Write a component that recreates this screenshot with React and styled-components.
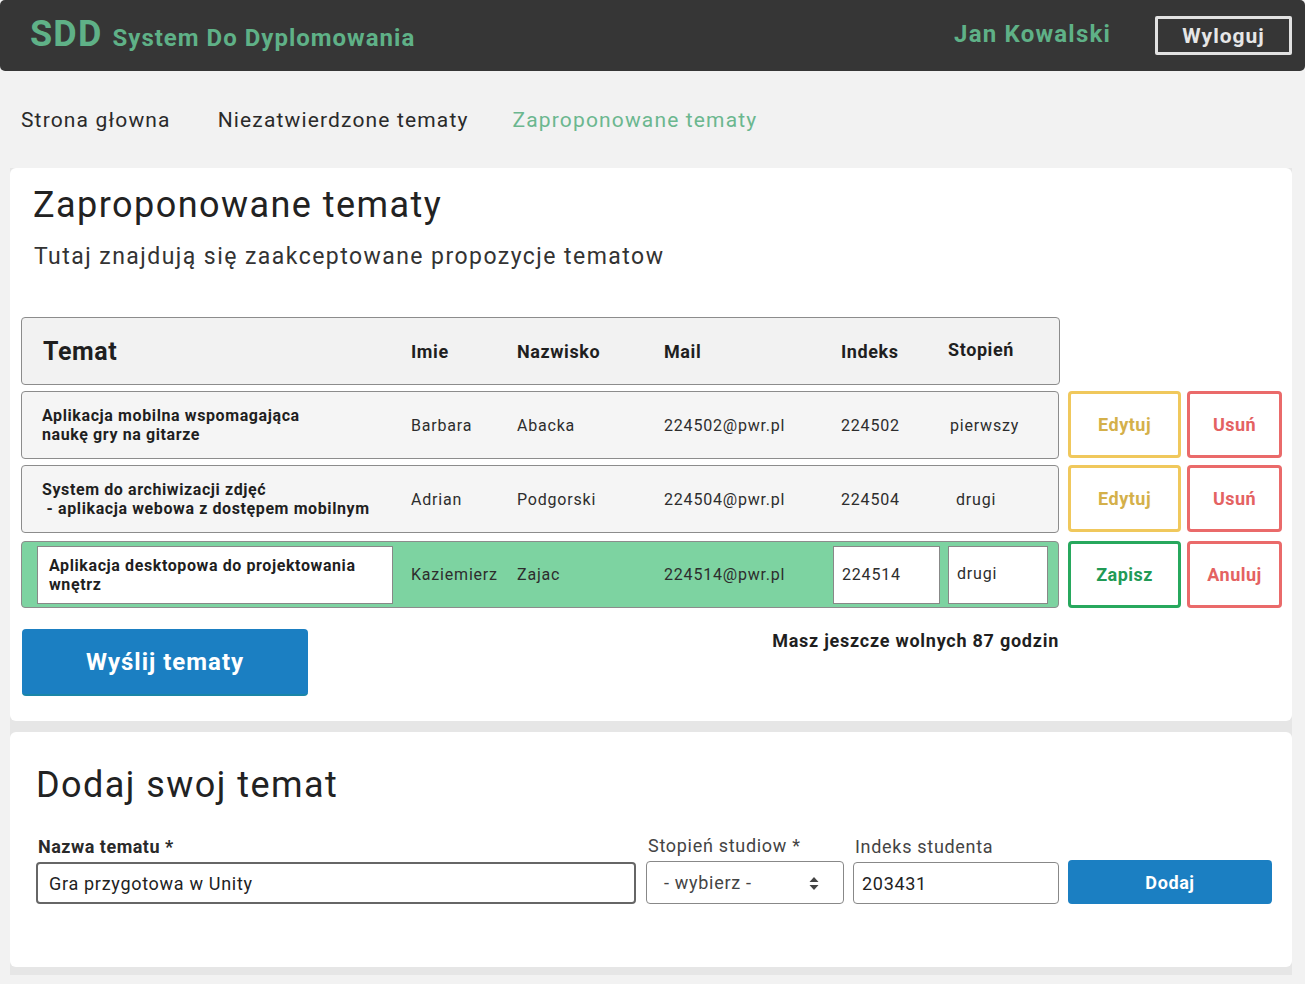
import styled, { createGlobalStyle } from "styled-components";

const GlobalStyle = createGlobalStyle`
  body {
    margin: 0;
    background: #f2f2f2;
    font-family: Roboto, "Noto Sans", sans-serif;
    color: #222;
  }
  * { box-sizing: border-box; }
`;

const topics = [
  {
    title: "Aplikacja mobilna wspomagająca\nnaukę gry na gitarze",
    name: "Barbara",
    surname: "Abacka",
    mail: "224502@pwr.pl",
    index: "224502",
    degree: "pierwszy",
  },
  {
    title: "System do archiwizacji zdjęć\n - aplikacja webowa z dostępem mobilnym",
    name: "Adrian",
    surname: "Podgorski",
    mail: "224504@pwr.pl",
    index: "224504",
    degree: "drugi",
  },
];

const App = () => {
  return (
    <>
      <GlobalStyle />
      <Header>
        <Brand>
          <Logo>SDD</Logo>
          <BrandName>System Do Dyplomowania</BrandName>
        </Brand>
        <User>Jan Kowalski</User>
        <Logout>Wyloguj</Logout>
      </Header>

      <Nav>
        <NavLink>Strona głowna</NavLink>
        <NavLink>Niezatwierdzone tematy</NavLink>
        <NavLink $active>Zaproponowane tematy</NavLink>
      </Nav>

      <Cards>
        <Card>
          <Title>Zaproponowane tematy</Title>
          <Subtitle>Tutaj znajdują się zaakceptowane propozycje tematow</Subtitle>

          <Table>
            <TableRow>
              <HeadRow>
                <HeadCell $big>Temat</HeadCell>
                <HeadCell>Imie</HeadCell>
                <HeadCell>Nazwisko</HeadCell>
                <HeadCell>Mail</HeadCell>
                <HeadCell>Indeks</HeadCell>
                <HeadCell $up>Stopień</HeadCell>
              </HeadRow>
            </TableRow>

            {topics.map((t) => (
              <TableRow key={t.index}>
                <Row>
                  <TopicCell>{t.title}</TopicCell>
                  <Cell>{t.name}</Cell>
                  <Cell>{t.surname}</Cell>
                  <Cell>{t.mail}</Cell>
                  <Cell>{t.index}</Cell>
                  <Cell $shift={t.degree === "drugi" ? 8 : 2}>{t.degree}</Cell>
                </Row>
                <ActionButton $color="#f0c85c" $text="#d4b04a">Edytuj</ActionButton>
                <ActionButton $narrow $color="#ea6a6a" $text="#e46262">Usuń</ActionButton>
              </TableRow>
            ))}

            <TableRow $last>
              <Row $editing>
                <TopicBox>{"Aplikacja desktopowa do projektowania\nwnętrz"}</TopicBox>
                <Cell>Kaziemierz</Cell>
                <Cell>Zajac</Cell>
                <Cell>224514@pwr.pl</Cell>
                <EditBox $offset={-8}>224514</EditBox>
                <EditBox $top>drugi</EditBox>
              </Row>
              <ActionButton $color="#27a85d" $text="#219a55">Zapisz</ActionButton>
              <ActionButton $narrow $color="#ea6a6a" $text="#e46262">Anuluj</ActionButton>
            </TableRow>
          </Table>

          <Footer>
            <SendButton>Wyślij tematy</SendButton>
            <Hours>Masz jeszcze wolnych 87 godzin</Hours>
          </Footer>
        </Card>

        <Card $form>
          <FormTitle>Dodaj swoj temat</FormTitle>
          <Form>
            <Field>
              <Label $bold>Nazwa tematu *</Label>
              <Input $thick value="Gra przygotowa w Unity" readOnly />
            </Field>
            <Field>
              <Label>Stopień studiow *</Label>
              <Select>
                <span>- wybierz -</span>
                <svg width="10" height="16" viewBox="0 0 10 16">
                  <path d="M5 2 L9.5 7 H0.5 Z" fill="#444" />
                  <path d="M5 15 L9.5 10 H0.5 Z" fill="#444" />
                </svg>
              </Select>
            </Field>
            <Field>
              <Label>Indeks studenta</Label>
              <Input value="203431" readOnly />
            </Field>
            <AddButton>Dodaj</AddButton>
          </Form>
        </Card>
      </Cards>
    </>
  );
};

export default App;

const Header = styled.header`
  display: flex;
  align-items: center;
  height: 71px;
  padding: 0 13px 4px 30px;
  background: #363636;
  border-radius: 5px;
`;

const Brand = styled.div`
  display: flex;
  align-items: baseline;
  gap: 10px;
  flex: 1;
  color: #5fb187;
  font-weight: 700;
`;

const Logo = styled.span`
  font-size: 36px;
  letter-spacing: 1.2px;
`;

const BrandName = styled.span`
  font-size: 24px;
  letter-spacing: 1px;
`;

const User = styled.div`
  color: #5fb187;
  font-size: 24px;
  font-weight: 700;
  letter-spacing: 1.2px;
  margin-right: 44px;
`;

const Logout = styled.button`
  width: 137px;
  height: 39px;
  margin-top: 4px;
  background: transparent;
  border: 3px solid #e2e2e2;
  border-radius: 2px;
  color: #e6e6e6;
  font-family: Roboto, sans-serif;
  font-size: 21px;
  font-weight: 700;
  letter-spacing: 1px;
`;

const Nav = styled.nav`
  display: flex;
  gap: 47px;
  height: 97px;
  align-items: center;
  padding: 0 21px;
`;

const NavLink = styled.a`
  margin-left: ${(p) => (p.$active ? "-3px" : "0")};
  font-size: 21px;
  letter-spacing: 1.15px;
  color: ${(p) => (p.$active ? "#6bb78f" : "#2a2a2a")};
`;

const Cards = styled.div`
  display: flex;
  flex-direction: column;
  gap: 11px;
  margin: 0 13px 0 10px;
  padding-bottom: 8px;
  background: #e6e6e6;
`;

const Card = styled.section`
  background: #fff;
  border-radius: 6px;
  padding: ${(p) => (p.$form ? "30px 20px 63px 26px" : "14px 10px 25px 11px")};
`;

const Title = styled.h1`
  margin: 0 0 0 12px;
  font-size: 36px;
  font-weight: 400;
  letter-spacing: 1.45px;
  line-height: 46px;
`;

const Subtitle = styled.p`
  margin: 14px 0 0 13px;
  font-size: 23px;
  letter-spacing: 1.45px;
  color: #333;
  line-height: 30px;
`;

const Table = styled.div`
  display: flex;
  flex-direction: column;
  gap: 6px;
  margin-top: 45px;
`;

const TableRow = styled.div`
  display: flex;
  align-items: flex-start;
  gap: 6px;
  margin-top: ${(p) => (p.$last ? "2px" : "0")};
`;

const Row = styled.div`
  display: grid;
  grid-template-columns: 374px 106px 147px 177px 107px 1fr;
  align-items: center;
  width: 1039px;
  height: ${(p) => (p.$editing ? "67px" : "68px")};
  margin-right: 3px;
  padding-left: 15px;
  background: ${(p) => (p.$editing ? "#7dd3a1" : "#f5f5f5")};
  border: 1px solid #8c8c8c;
  border-radius: 4px;
`;

const HeadRow = styled(Row)`
  background: #f2f2f2;
`;

const HeadCell = styled.div`
  padding-left: ${(p) => (p.$big ? "6px" : "0")};
  font-size: ${(p) => (p.$big ? "25px" : "18px")};
  font-weight: 700;
  letter-spacing: 0.6px;
  color: #1f1f1f;
  margin-top: ${(p) => (p.$up ? "-3px" : "0")};
`;

const Cell = styled.div`
  margin-left: ${(p) => p.$shift || 0}px;
  font-size: 16px;
  letter-spacing: 0.8px;
  color: #2d2d2d;
`;

const TopicCell = styled.div`
  padding-left: 5px;
  white-space: pre-wrap;
  font-size: 16px;
  font-weight: 700;
  letter-spacing: 0.6px;
  line-height: 19px;
  color: #1f1f1f;
`;

const TopicBox = styled(TopicCell)`
  width: 356px;
  height: 58px;
  padding: 9px 11px;
  display: flex;
  align-items: center;
  background: #fff;
  border: 1px solid #888;
`;

const EditBox = styled.div`
  width: ${(p) => (p.$offset ? "107px" : "100px")};
  height: 58px;
  margin-left: ${(p) => p.$offset || 0}px;
  padding: ${(p) => (p.$top ? "17px 8px" : "0 8px")};
  display: flex;
  align-items: ${(p) => (p.$top ? "flex-start" : "center")};
  background: #fff;
  border: 1px solid #888;
  font-size: 16px;
  letter-spacing: 0.8px;
  color: #2d2d2d;
`;

const ActionButton = styled.button`
  width: ${(p) => (p.$narrow ? "95px" : "113px")};
  height: 67px;
  background: #fff;
  border: 3px solid ${(p) => p.$color};
  border-radius: 4px;
  color: ${(p) => p.$text};
  font-family: Roboto, sans-serif;
  font-size: 18px;
  font-weight: 700;
  letter-spacing: 0.5px;
`;

const Footer = styled.div`
  display: flex;
  justify-content: space-between;
  align-items: flex-start;
  width: 1038px;
  margin-top: 21px;
`;

const SendButton = styled.button`
  width: 286px;
  height: 67px;
  margin-left: 1px;
  background: #1b7fc2;
  border: none;
  border-bottom: 2px solid #1a86a8;
  border-radius: 4px;
  color: #fff;
  font-family: Roboto, sans-serif;
  font-size: 24px;
  font-weight: 700;
  letter-spacing: 1px;
`;

const Hours = styled.div`
  margin-top: 1px;
  font-size: 18px;
  font-weight: 700;
  letter-spacing: 0.75px;
  color: #1f1f1f;
`;

const FormTitle = styled.h2`
  margin: 0;
  font-size: 36px;
  font-weight: 400;
  letter-spacing: 1.45px;
  line-height: 46px;
`;

const Form = styled.div`
  display: flex;
  align-items: flex-end;
  gap: 9px;
  margin-top: 27px;
`;

const Field = styled.label`
  display: flex;
  flex-direction: column;
  gap: 4px;
`;

const Label = styled.span`
  padding-left: 2px;
  font-size: 18px;
  font-weight: ${(p) => (p.$bold ? 700 : 400)};
  letter-spacing: ${(p) => (p.$bold ? "0.5px" : "0.7px")};
  color: ${(p) => (p.$bold ? "#2a2a2a" : "#444")};
  line-height: 22px;
`;

const Input = styled.input`
  width: ${(p) => (p.$thick ? "600px" : "206px")};
  height: 42px;
  margin-right: ${(p) => (p.$thick ? "1px" : "0")};
  padding: 0 ${(p) => (p.$thick ? "11px" : "8px")};
  border: ${(p) => (p.$thick ? "2px solid #666" : "1px solid #888")};
  border-radius: 4px;
  font-family: Roboto, sans-serif;
  font-size: 18px;
  letter-spacing: 0.7px;
  color: #222;
`;

const Select = styled.div`
  display: flex;
  align-items: center;
  justify-content: space-between;
  width: 198px;
  height: 43px;
  padding: 0 24px 0 17px;
  border: 1px solid #888;
  border-radius: 4px;
  font-size: 18px;
  letter-spacing: 0.7px;
  color: #444;
`;

const AddButton = styled.button`
  width: 204px;
  height: 44px;
  background: #1b7fc2;
  border: none;
  border-radius: 4px;
  color: #fff;
  font-family: Roboto, sans-serif;
  font-size: 18px;
  font-weight: 700;
  letter-spacing: 0.6px;
`;
